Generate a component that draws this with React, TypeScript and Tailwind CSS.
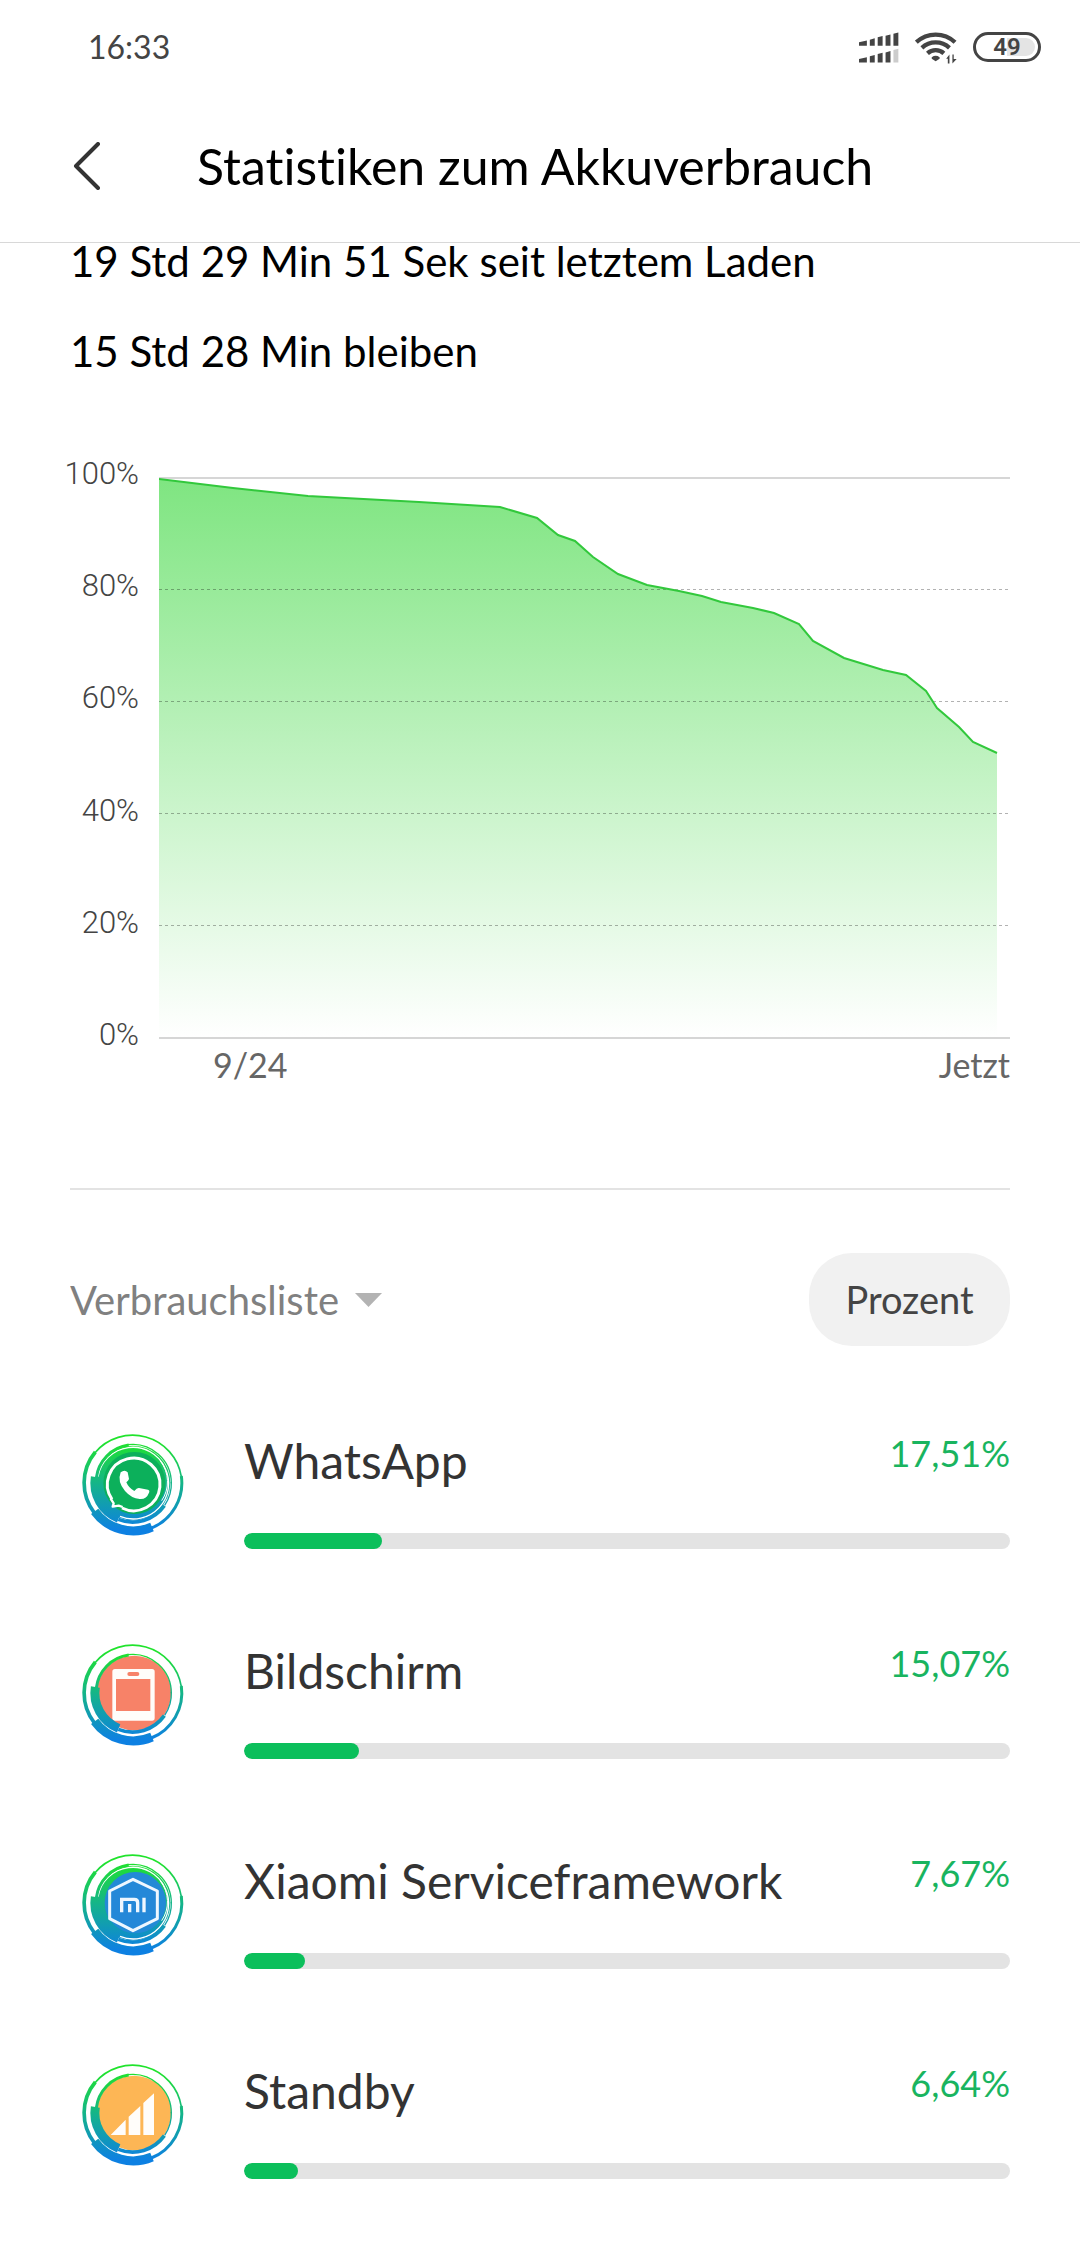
import type { ReactNode } from "react"

const usage = [
    { name: "WhatsApp", percent: "17,51%", fill: 18, icon: "whatsapp" },
    { name: "Bildschirm", percent: "15,07%", fill: 15, icon: "screen" },
    { name: "Xiaomi Serviceframework", percent: "7,67%", fill: 8, icon: "xiaomi" },
    { name: "Standby", percent: "6,64%", fill: 7, icon: "standby" },
]

// x / y in chart units, 851 x 562
const curve =
    "0,2 74,11 149,19 260,25 341,30 378,41 399,58 416,64 434,80 459,97 488,108 520,114 543,119 562,125 594,131 615,136 640,147 654,164 685,181 724,193 747,198 767,214 778,231 800,250 814,265 838,276"

const SignalIcon = () => (
    <svg viewBox="57 36 122 94" className="w-10 h-[31px]" fill="#444" aria-hidden="true">
        <path d="M57 67l24-5v16H57zM90 59l15-4v23H90zM114 52l15-4v30h-15zM138 47l15-4v35h-15zM162 41l15-4v41h-15z" />
        <path d="M57 118l24-5v16H57zM90 110l15-4v23H90zM114 103l15-4v30h-15zM138 98l15-4v35h-15z" />
        <path d="M162 91l15-4v42h-15z" fill="#ccc" />
    </svg>
)

const WifiIcon = () => (
    <svg viewBox="225 35 128 100" className="w-[42px] h-[33px]" fill="none" stroke="#444" strokeWidth="13" aria-hidden="true">
        <path d="M229 69a86 86 0 0 1 118 0" />
        <path d="M246 86a62 62 0 0 1 84 0" />
        <path d="M263 103a37 37 0 0 1 50 0" />
        <path d="M276 115q12-9 24 0v4l-12 8-12-8z" fill="#444" stroke="none" />
        <path d="M320 119l10-13v28h-5v-15zM339 134v-28h4v14h9z" fill="#444" stroke="none" />
    </svg>
)

const Battery = () => (
    <div className="relative w-[68px] h-[30px] rounded-full border-[3px] border-[#444] flex items-center justify-center">
        <div className="absolute right-[3px] top-[3px] bottom-[3px] w-7 rounded-r-full bg-[#e4e4e4]" />
        <span className="relative font-[Roboto,sans-serif] text-[24px] leading-6 font-semibold text-[#444]">49</span>
    </div>
)

const icons: Record<string, ReactNode> = {
    whatsapp: (
        <>
            <circle cx="189" cy="189" r="112" fill="url(#ring)" />
            <path d="M84 170A106 106 0 0 1 285 144A106 106 0 0 1 150 289" fill="none" stroke="#fff" strokeWidth="4" />
            <path d="M271 123A101 101 0 0 1 275 242" fill="none" stroke="#fff" strokeWidth="3" />
            <circle cx="193" cy="189" r="93" fill="#0cb05b" />
            <path d="M126 238A79 79 0 1 1 156 264" fill="none" stroke="#fff" strokeWidth="9" />
            <path d="M122 236l9 14-3 10 18-3 12 4" fill="none" stroke="#fff" strokeWidth="7" strokeLinejoin="round" />
            <path d="M152 157q12-9 21 0l4 20q-2 6-8 10q7 17 24 26q8-10 14-9l27 5q6 2 3 9q-8 21-28 19q-25-2-44-24q-24-28-13-56z" fill="#fff" />
        </>
    ),
    screen: (
        <>
            <circle cx="192" cy="189" r="112" fill="#f78268" />
            <rect x="127" y="117" width="127" height="155" rx="8" fill="#fffdfa" />
            <rect x="138" y="147" width="103" height="96" fill="#f78268" />
            <rect x="172" y="126" width="36" height="12" rx="6" fill="#f78268" />
        </>
    ),
    xiaomi: (
        <>
            <circle cx="189" cy="189" r="112" fill="url(#ring)" />
            <path d="M84 170A106 106 0 0 1 285 144A106 106 0 0 1 150 289" fill="none" stroke="#fff" strokeWidth="4" />
            <path d="M271 123A101 101 0 0 1 275 242" fill="none" stroke="#fff" strokeWidth="3" />
            <circle cx="196" cy="188" r="92" fill="#238ad6" />
            <path d="M119 153l70-35 73 35v83l-73 36-70-36z" fill="#2488d8" stroke="#eef7ff" strokeWidth="9" strokeLinejoin="round" />
            <path d="M155 217v-39h38q10 0 10 10v29M179 192v25M222 173v44" fill="none" stroke="#eef7ff" strokeWidth="10" />
        </>
    ),
    standby: (
        <>
            <circle cx="192" cy="189" r="112" fill="#fdb655" />
            <path d="M122 255l45-46v46zM176 200l35-32v87h-35zM220 159l32-29v125h-32z" fill="#fffdfa" />
        </>
    ),
}

const AppIcon = ({ type }: { type: string }) => (
    <svg viewBox="0 0 390 390" className="w-[130px] h-[130px] shrink-0" aria-hidden="true">
        <defs>
            <linearGradient id="ring" gradientUnits="userSpaceOnUse" x1="0" y1="40" x2="0" y2="346">
                <stop offset="0.08" stopColor="#20e32c" />
                <stop offset="0.5" stopColor="#14b38b" />
                <stop offset="0.95" stopColor="#0d80e2" />
            </linearGradient>
        </defs>
        {icons[type]}
        <g fill="none" stroke="url(#ring)">
            {/* outer ring */}
            <path d="M75 98A148 148 0 0 1 334 170" strokeWidth="5" />
            <path d="M76 96A146 146 0 0 0 74 280" strokeWidth="11" />
            <path d="M334 168A146 146 0 0 1 244 324" strokeWidth="9" />
            <path d="M74 274A143 143 0 0 0 246 321" strokeWidth="27" />
            {/* inner ring */}
            <path d="M79 174A113 113 0 0 1 176 75" strokeWidth="9" />
            <path d="M174 74A116 116 0 0 1 304 190" strokeWidth="4" />
            <path d="M304 186A116 116 0 0 1 284 256" strokeWidth="4" />
            <path d="M76 171A114 114 0 0 0 146 295" strokeWidth="27" />
            <path d="M145 298A117 117 0 0 0 283 257" strokeWidth="11" />
        </g>
    </svg>
)

const Chart = () => (
    <section className="mt-[89px] flex items-start gap-5" aria-label="Akkustand">
        <div className="flex w-[69px] h-[593px] flex-col justify-between font-[Roboto,sans-serif] font-light text-[31px] leading-8 text-[#444]">
            {["100%", "80%", "60%", "40%", "20%", "0%"].map((p) => (
                <span key={p} className="flex justify-end">{p}</span>
            ))}
        </div>
        <div className="flex-1 pt-[19px]">
            <svg viewBox="0 0 851 562" preserveAspectRatio="none" className="block w-full h-[562px]">
                <defs>
                    <linearGradient id="area" x1="0" y1="0" x2="0" y2="1">
                        <stop offset="0" stopColor="#7fe581" />
                        <stop offset="1" stopColor="#ffffff" />
                    </linearGradient>
                </defs>
                <path d="M0 1H851M0 561H851" stroke="#d6d6d6" strokeWidth="2" />
                <polygon points={`${curve} 838,560 0,560`} fill="url(#area)" />
                <path
                    d="M0 112.500H851M0 224.500H851M0 336.500H851M0 448.500H851"
                    stroke="#000"
                    strokeOpacity="0.3"
                    strokeWidth="1"
                    strokeDasharray="3 3"
                />
                <polyline points={curve} fill="none" stroke="#32c83c" strokeWidth="2" />
            </svg>
            <div className="mt-[10px] flex justify-between pl-[54px] text-[34px] leading-8 text-[#666]">
                <span>9/24</span>
                <span>Jetzt</span>
            </div>
        </div>
    </section>
)

const App = () => {
    return (
        <div className="min-h-screen bg-white font-[Lato,sans-serif] [font-variant-ligatures:none] text-black">
            <div className="flex h-[94px] items-center justify-between pl-[88px] pr-[39px]">
                <span className="text-[32px] text-[#444]">16:33</span>
                <div className="flex items-center gap-4">
                    <SignalIcon />
                    <WifiIcon />
                    <Battery />
                </div>
            </div>

            <header className="flex h-[149px] items-center border-b border-[#d8d8d8] pb-1 pl-[73px]">
                <button type="button" aria-label="Zurück" className="mr-24">
                    <svg viewBox="0 0 28 48" className="w-7 h-12" fill="none" stroke="#333" strokeWidth="4" strokeLinecap="round" strokeLinejoin="round">
                        <path d="M25 2L3 24l22 22" />
                    </svg>
                </button>
                <h1 className="text-[50px] leading-[56px]">Statistiken zum Akkuverbrauch</h1>
            </header>

            <main className="px-[70px] pb-[68px]">
                <p className="text-[42px] leading-9">19 Std 29 Min 51 Sek seit letztem Laden</p>
                <p className="mt-[54px] text-[42px] leading-9">15 Std 28 Min bleiben</p>

                <Chart />

                <hr className="mt-[107px] border-t-2 border-[#e3e3e3]" />

                <div className="mt-[63px] flex items-center justify-between">
                    <div className="flex items-center gap-[15px]">
                        <select aria-label="Liste" className="appearance-none bg-transparent text-[40px] leading-[48px] text-[#808080]">
                            <option>Verbrauchsliste</option>
                        </select>
                        <svg viewBox="0 0 27 14" className="w-[27px] h-[14px]" fill="#b3b3b3" aria-hidden="true">
                            <path d="M0 0h27L13.500 14z" />
                        </svg>
                    </div>
                    <button type="button" className="h-[93px] w-[201px] rounded-[43px] bg-[#f1f1f1] text-[38px] text-[#444]">
                        Prozent
                    </button>
                </div>

                <ul className="mt-[74px] space-y-20">
                    {usage.map((app) => (
                        <li key={app.name} className="flex gap-11">
                            <AppIcon type={app.icon} />
                            <div className="flex-1 pt-[7px]">
                                <div className="flex items-start justify-between leading-[52px]">
                                    <span className="mt-2 text-[48px] text-[#333]">{app.name}</span>
                                    <span className="text-[36px] text-[#19b45f]">{app.percent}</span>
                                </div>
                                <div className="mt-[46px] h-4 overflow-hidden rounded-full bg-[#e3e3e3]">
                                    <div className="h-full rounded-full bg-[#0bbf5b]" style={{ width: `${app.fill}%` }} />
                                </div>
                            </div>
                        </li>
                    ))}
                </ul>
            </main>
        </div>
    )
}

export default App
